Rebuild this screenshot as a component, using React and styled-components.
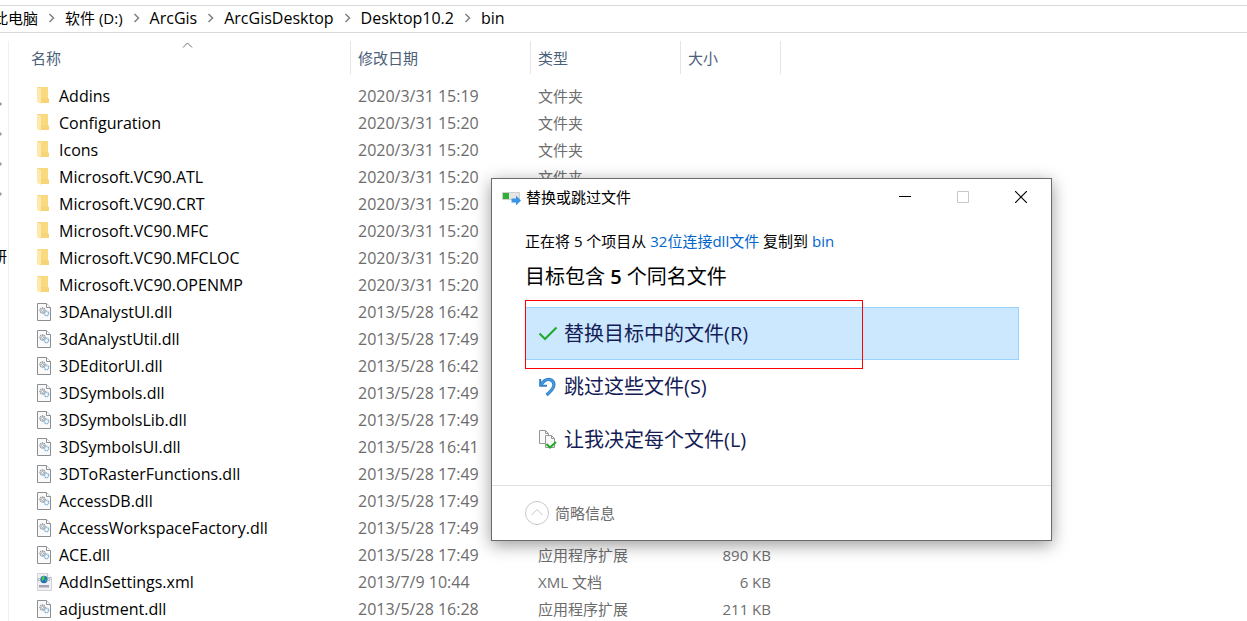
import React from 'react'
import styled, { createGlobalStyle } from 'styled-components'

const GlobalStyle = createGlobalStyle`
  * {
    box-sizing: border-box;
  }
  html, body, #root {
    height: 100%;
  }
  body {
    margin: 0;
    overflow: hidden;
    background: #fff;
    color: #000;
    font-family: "Open Sans", "Noto Sans CJK SC", sans-serif;
    font-size: 15px;
    line-height: 20px;
  }
  button {
    font: inherit;
    color: inherit;
    border: 0;
    padding: 0;
    background: none;
  }
`

const path = [
  { label: '此电脑' },
  { label: '软件 (D:)' },
  { label: 'ArcGis', latin: true },
  { label: 'ArcGisDesktop', latin: true },
  { label: 'Desktop10.2', latin: true },
  { label: 'bin', latin: true },
]

const files = [
  { name: 'Addins', date: '2020/3/31 15:19', kind: 'folder' },
  { name: 'Configuration', date: '2020/3/31 15:20', kind: 'folder' },
  { name: 'Icons', date: '2020/3/31 15:20', kind: 'folder' },
  { name: 'Microsoft.VC90.ATL', date: '2020/3/31 15:20', kind: 'folder' },
  { name: 'Microsoft.VC90.CRT', date: '2020/3/31 15:20', kind: 'folder' },
  { name: 'Microsoft.VC90.MFC', date: '2020/3/31 15:20', kind: 'folder' },
  { name: 'Microsoft.VC90.MFCLOC', date: '2020/3/31 15:20', kind: 'folder' },
  { name: 'Microsoft.VC90.OPENMP', date: '2020/3/31 15:20', kind: 'folder' },
  { name: '3DAnalystUI.dll', date: '2013/5/28 16:42', kind: 'dll' },
  { name: '3dAnalystUtil.dll', date: '2013/5/28 17:49', kind: 'dll' },
  { name: '3DEditorUI.dll', date: '2013/5/28 16:42', kind: 'dll' },
  { name: '3DSymbols.dll', date: '2013/5/28 17:49', kind: 'dll' },
  { name: '3DSymbolsLib.dll', date: '2013/5/28 17:49', kind: 'dll' },
  { name: '3DSymbolsUI.dll', date: '2013/5/28 16:41', kind: 'dll' },
  { name: '3DToRasterFunctions.dll', date: '2013/5/28 17:49', kind: 'dll' },
  { name: 'AccessDB.dll', date: '2013/5/28 17:49', kind: 'dll' },
  { name: 'AccessWorkspaceFactory.dll', date: '2013/5/28 17:49', kind: 'dll' },
  { name: 'ACE.dll', date: '2013/5/28 17:49', kind: 'dll', size: '890 KB' },
  { name: 'AddInSettings.xml', date: '2013/7/9 10:44', kind: 'xml', size: '6 KB' },
  { name: 'adjustment.dll', date: '2013/5/28 16:28', kind: 'dll', size: '211 KB' },
]

const kinds = {
  folder: '文件夹',
  dll: '应用程序扩展',
  xml: 'XML 文档',
}

const FolderIcon = () => (
  <svg width="16" height="20" viewBox="0 0 16 20">
    <path d="M0 1h11v11l1 1v4H3z" fill="#f7d477" />
    <path d="M3 1h8v11H3z" fill="#f9da80" />
    <path d="M0 1l4 2v15l-4-2z" fill="#fde9ae" />
  </svg>
)

const Page = () => (
  <>
    <path d="M.5 1.500h9l4 4v13H.5z" fill="#fafafa" stroke="#8b8f93" />
    <path d="M9.500 1.500v4h4" fill="#fff" stroke="#8b8f93" />
  </>
)

const DllIcon = () => (
  <svg width="16" height="20" viewBox="0 0 16 20">
    <Page />
    <circle cx="5.500" cy="8.500" r="2.500" fill="#f0f1f2" stroke="#8a9096" strokeWidth="1.400" strokeDasharray="1.200 .6" />
    <circle cx="5.500" cy="8.500" r="1" fill="#fff" stroke="#8a9096" strokeWidth=".6" />
    <circle cx="9.500" cy="11.500" r="2.200" fill="#e9f3fa" stroke="#82b1d2" strokeWidth="1.400" strokeDasharray="1.200 .6" />
    <circle cx="9.500" cy="11.500" r=".8" fill="#fff" />
  </svg>
)

const XmlIcon = () => (
  <svg width="16" height="20" viewBox="0 0 16 20">
    <path d="M.5 1.500h10l4 4v13H.5z" fill="#f1f1f5" stroke="#d2d2d6" />
    <path d="M10.500 1.500v4h4" fill="#fff" stroke="#c4c4c8" />
    <circle cx="7" cy="7.500" r="3.700" fill="#2070b8" />
    <path d="M4.500 5.500Q7 3 8 5l-1 3-2 1zM8 8l2-1-1 3z" fill="#4cc552" />
    <path d="M2.500 6L1 7.500 2.500 9M11.500 6L13 7.500 11.500 9" fill="none" stroke="#8a90a0" />
    <path d="M2 13h10v2.500H2z" fill="#a5a3b6" />
  </svg>
)

const icons = { folder: FolderIcon, dll: DllIcon, xml: XmlIcon }

const ChevronIcon = () => (
  <svg width="7" height="10" viewBox="0 0 7 10">
    <path d="M1.500 1l4 4-4 4" fill="none" stroke="#808080" strokeWidth="1.500" />
  </svg>
)

const PinIcon = () => (
  <svg width="3" height="6" viewBox="0 0 3 6">
    <path d="M0 1l2 2-2 2z" fill="#8c969f" />
  </svg>
)

const CopyIcon = () => (
  <svg width="20" height="16" viewBox="0 0 20 16">
    <path d="M.5 3.500h17v7H.5z" fill="#e6e6e6" stroke="#cfcfcf" />
    <path d="M1 4h6v6H1z" fill="#2eb135" />
    <path d="M9.500 9.500h4.500v-3l5 5-5 5v-3H9.500z" fill="#3a96e4" />
  </svg>
)

const CheckIcon = () => (
  <svg width="20" height="20" viewBox="0 0 20 20">
    <path d="M1.500 9.500l5.500 5.500L18.500 3.500" fill="none" stroke="#25ab2c" strokeWidth="2.200" />
  </svg>
)

const UndoIcon = () => (
  <svg width="20" height="20" viewBox="0 0 20 20">
    <path d="M2.200 2v6.800H9" fill="none" stroke="#2f80c4" strokeWidth="2" />
    <path d="M3 8Q7 1.500 12 2.600Q17 4.500 15.600 9.500Q14.500 13 8.500 18" fill="none" stroke="#2f80c4" strokeWidth="3.200" />
    <path d="M3 8Q7 1.500 12 2.600Q17 4.500 15.600 9.500Q14.500 13 8.500 18" fill="none" stroke="#4a9ade" strokeWidth="1.600" />
  </svg>
)

const DecideIcon = () => (
  <svg width="20" height="20" viewBox="0 0 20 20">
    <path d="M1.500.5h6l3 3v10h-9z" fill="#fafafa" stroke="#969696" />
    <path d="M7.500.5v3h3" fill="none" stroke="#969696" />
    <path d="M7.500 5.500h6l3 3v9h-9z" fill="#fafafa" stroke="#969696" />
    <path d="M13.500 5.500v3h3" fill="none" stroke="#969696" />
    <path d="M8.500 14l3.500 3.500L18 12" fill="none" stroke="#25ab2c" strokeWidth="2.200" />
  </svg>
)

const Explorer = styled.div`
  position: relative;
  display: flex;
  flex-direction: column;
  height: 100%;
  padding-top: 5px;
  overflow: hidden;
`

const AddressBar = styled.nav`
  display: flex;
  flex: none;
  align-items: center;
  height: 28px;
  padding-bottom: 2px;
  border: solid #d9d9d9;
  border-width: 1px 0;
`

const Crumb = styled.a`
  color: inherit;
  font-size: ${({ $latin }) => ($latin ? 16 : 15)}px;
  text-decoration: none;
  white-space: nowrap;
  /* the first crumb is scrolled partly out of the bar */
  &:first-child {
    display: flex;
    justify-content: flex-end;
    width: 38px;
    overflow: hidden;
  }
`

const Separator = styled.span`
  display: flex;
  justify-content: center;
  width: 27px;
`

const Body = styled.div`
  display: flex;
  flex: 1;
  padding-top: 8px;
`

const Sidebar = styled.aside`
  display: flex;
  flex-direction: column;
  width: 9px;
  padding-top: 48px;
  border-right: 1px solid #f0f0f0;
`

const SideItem = styled.div`
  display: flex;
  flex: none;
  align-items: center;
  height: 30px;
`

const SideLabel = styled(SideItem)`
  justify-content: flex-end;
  width: 7px;
  margin-top: 32px;
  overflow: hidden;
`

const FileTable = styled.table`
  align-self: flex-start;
  width: 757px;
  margin-left: 15px;
  table-layout: fixed;
  border-collapse: collapse;
`

const Column = styled.th`
  position: relative;
  width: ${({ $width }) => $width}px;
  height: 41px;
  padding: 0 0 8px;
  color: #4c607a;
  font-weight: 400;
  text-align: left;
`

const ColumnLabel = styled.div`
  height: 33px;
  padding: 7px;
  border-right: 1px solid #e5e5e5;
`

const SortArrow = styled.svg`
  position: absolute;
  top: 1px;
  left: calc(50% - 6px);
`

const Cell = styled.td`
  height: 27px;
  padding: 0 10px 0 7px;
  color: #6d6d6d;
  font-size: ${({ $latin }) => ($latin ? 16 : 15)}px;
  text-align: ${({ $align }) => $align || 'left'};
  white-space: nowrap;
`

const FileName = styled.div`
  display: flex;
  align-items: center;
  gap: 6px;
  padding-left: 6px;
  color: #000;
`

const Dialog = styled.section`
  position: absolute;
  top: 178px;
  left: 491px;
  width: 561px;
  border: 1px solid #6b6b6b;
  background: #fff;
  box-shadow: 0 4px 16px rgba(0, 0, 0, 0.4);
`

const TitleBar = styled.header`
  display: flex;
  align-items: center;
  height: 36px;
  padding: 0 1px 0 10px;
`

const Title = styled.span`
  flex: 1;
  padding-left: 4px;
`

const WindowButton = styled.button`
  display: flex;
  align-items: center;
  justify-content: center;
  width: 58px;
  height: 36px;
  color: ${({ disabled }) => (disabled ? '#c8c8c8' : '#000')};
`

const Content = styled.div`
  padding: 16px 32px 19px 33px;
`

const Message = styled.p`
  margin: 0;
`

const FileLink = styled.a`
  color: #0066cc;
  text-decoration: none;
`

const Heading = styled.h1`
  margin: 11px 0 15px;
  font-size: 20px;
  font-weight: 400;
  line-height: 30px;
`

const Count = styled.span`
  font-weight: 600;
`

const Options = styled.div`
  position: relative;
  display: flex;
  flex-direction: column;
`

const Option = styled.button`
  display: flex;
  align-items: center;
  gap: 6px;
  height: 53px;
  padding: 0 12px;
  border: 1px solid ${({ $active }) => ($active ? '#99d1ff' : 'transparent')};
  background: ${({ $active }) => ($active ? '#cce8ff' : 'transparent')};
  color: #151c55;
  font-size: 20px;
  line-height: 30px;
`

const Highlight = styled.div`
  position: absolute;
  top: -7px;
  left: 0;
  width: 338px;
  height: 69px;
  border: 1px solid #ff0000;
  pointer-events: none;
`

const Footer = styled.footer`
  display: flex;
  align-items: center;
  height: 55px;
  padding-left: 33px;
  border-top: 1px solid #dfdfdf;
`

const Details = styled.button`
  display: flex;
  align-items: center;
  gap: 6px;
  color: #6d6d6d;
`

const App = () => (
  <>
    <GlobalStyle />
    <Explorer>
      <AddressBar>
        {path.map(({ label, latin }, i) => (
          <React.Fragment key={label}>
            {i > 0 && <Separator><ChevronIcon /></Separator>}
            <Crumb href="#" $latin={latin}>{i === 0 ? <span>{label}</span> : label}</Crumb>
          </React.Fragment>
        ))}
      </AddressBar>
      <Body>
        <Sidebar>
          {[1, 2, 3, 4].map(n => <SideItem key={n}><PinIcon /></SideItem>)}
          <SideLabel><span>研</span></SideLabel>
        </Sidebar>
        <FileTable>
          <thead>
            <tr>
              <Column $width={327}>
                <SortArrow width="11" height="7" viewBox="0 0 11 7">
                  <path d="M1 5.500l4.500-4.500L10 5.500" fill="none" stroke="#6d6d6d" />
                </SortArrow>
                <ColumnLabel>名称</ColumnLabel>
              </Column>
              <Column $width={180}><ColumnLabel>修改日期</ColumnLabel></Column>
              <Column $width={150}><ColumnLabel>类型</ColumnLabel></Column>
              <Column $width={100}><ColumnLabel>大小</ColumnLabel></Column>
            </tr>
          </thead>
          <tbody>
            {files.map(file => {
              const Icon = icons[file.kind]
              return (
                <tr key={file.name}>
                  <Cell $latin><FileName><Icon />{file.name}</FileName></Cell>
                  <Cell $latin>{file.date}</Cell>
                  <Cell>{kinds[file.kind]}</Cell>
                  <Cell $align="right">{file.size}</Cell>
                </tr>
              )
            })}
          </tbody>
        </FileTable>
      </Body>
      <Dialog role="dialog" aria-labelledby="dialog-title">
        <TitleBar>
          <CopyIcon />
          <Title id="dialog-title">替换或跳过文件</Title>
          <WindowButton aria-label="最小化">
            <svg width="12" height="12"><path d="M0 5.500h12" stroke="currentColor" /></svg>
          </WindowButton>
          <WindowButton aria-label="最大化" disabled>
            <svg width="12" height="12"><path d="M.5.5h11v11H.5z" fill="none" stroke="currentColor" /></svg>
          </WindowButton>
          <WindowButton aria-label="关闭">
            <svg width="12" height="12"><path d="M0 0l12 12M12 0L0 12" stroke="currentColor" strokeWidth="1.200" /></svg>
          </WindowButton>
        </TitleBar>
        <Content>
          <Message>
            正在将 5 个项目从 <FileLink href="#">32位连接dll文件</FileLink> 复制到 <FileLink href="#">bin</FileLink>
          </Message>
          <Heading>目标包含 <Count>5</Count> 个同名文件</Heading>
          <Options>
            <Option $active><CheckIcon />替换目标中的文件(R)</Option>
            <Option><UndoIcon />跳过这些文件(S)</Option>
            <Option><DecideIcon />让我决定每个文件(L)</Option>
            <Highlight />
          </Options>
        </Content>
        <Footer>
          <Details>
            <svg width="24" height="24" viewBox="0 0 24 24">
              <circle cx="12" cy="12" r="11.500" fill="none" stroke="#c8c8c8" />
              <path d="M6.500 14l5.500-5.500 5.500 5.500" fill="none" stroke="#c8c8c8" />
            </svg>
            简略信息
          </Details>
        </Footer>
      </Dialog>
    </Explorer>
  </>
)

export default App
